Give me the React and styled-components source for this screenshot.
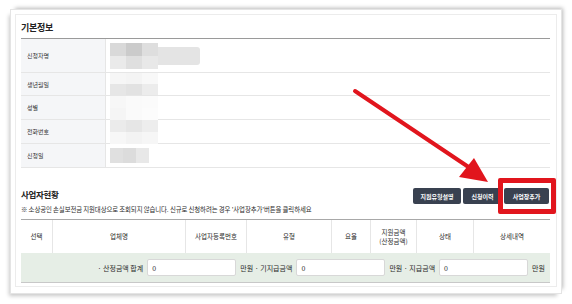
import React from 'react';
import styled, { createGlobalStyle } from 'styled-components';

const GlobalStyle = createGlobalStyle`
  body {
    margin: 0;
    background: #fff;
    font-family: "Noto Sans CJK KR", "Noto Sans", sans-serif;
    color: #333;
  }
`;

const Page = styled.div`
  position: relative;
  width: 572px;
  height: 304px;
  padding: 9px 0 0 10px;
  box-sizing: border-box;
  overflow: hidden;
`;

const Paper = styled.div`
  width: 552px;
  height: 285px;
  box-sizing: border-box;
  border: 1px solid #e4e4e4;
  background: #fff;
  box-shadow: 3px -3px 4px -2px rgba(0, 0, 0, 0.28), -3px 4px 4px -2px rgba(0, 0, 0, 0.22);
`;

const Inner = styled.div`
  margin: 4px;
  height: 273px;
  box-sizing: border-box;
  border: 1px solid #ececec;
  padding: 7px 6px 0 5px;
`;

const Title = styled.h2`
  margin: 0;
  font-size: 9px;
  line-height: 11px;
  font-weight: 700;
  color: #222;
  letter-spacing: -0.3px;
`;

const InfoTable = styled.div`
  margin-top: 5px;
  border-top: 1px solid #9a9a9a;
  display: grid;
  grid-template-columns: 85px 1fr;
`;

const Label = styled.div`
  height: ${p => p.h}px;
  box-sizing: border-box;
  background: #f5f6f8;
  border-bottom: 1px solid #e6e6e6;
  border-right: 1px solid #e6e6e6;
  display: flex;
  align-items: center;
  padding-left: 6px;
  font-size: 6px;
  color: #333;
`;

const Value = styled.div`
  height: ${p => p.h}px;
  box-sizing: border-box;
  border-bottom: 1px solid #e6e6e6;
  display: flex;
  align-items: center;
  padding-left: 4px;
`;

const FakeInput = styled.div`
  position: relative;
  width: 90px;
  height: 18px;
  border-radius: 3px;
  background: #e4e4e4;
`;

const Mosaic = styled.div`
  display: grid;
  grid-template-columns: repeat(${p => p.cols}, ${p => p.cw}px);
  grid-auto-rows: ${p => p.ch}px;
  ${p => p.over && 'position: absolute; left: 0; top: -4px;'}
`;

const Cell = styled.div`
  background: ${p => p.c};
`;

const SectionHead = styled.div`
  margin-top: 20px;
  display: flex;
  justify-content: space-between;
  align-items: flex-start;
`;

const SubTitle = styled.h3`
  margin: 1px 0 0 0;
  font-size: 8.5px;
  line-height: 11px;
  font-weight: 700;
  color: #222;
  letter-spacing: -0.3px;
`;

const Buttons = styled.div`
  display: flex;
  gap: 2px;
  margin-right: 1px;
`;

const Btn = styled.button`
  width: ${p => p.w}px;
  height: 16px;
  padding: 0;
  border: none;
  border-radius: 2px;
  background: #394150;
  color: #fff;
  font-family: inherit;
  font-size: 6px;
  font-weight: 700;
`;

const Note = styled.p`
  margin: 2px 0 5px 0;
  font-size: 6.4px;
  line-height: 8px;
  color: #2a2a2a;
  letter-spacing: -0.1px;
`;

const Grid = styled.div`
  display: grid;
  grid-template-columns: 32px 133px 61px 85px 39px 46px 57px 1fr;
  border-top: 1px solid #a8a8a8;
`;

const Th = styled.div`
  height: 33px;
  box-sizing: border-box;
  border-right: ${p => (p.last ? 'none' : '1px solid #e6e6e6')};
  display: flex;
  align-items: center;
  justify-content: center;
  text-align: center;
  font-size: 6.5px;
  line-height: 9px;
  color: #2a2a2a;
  white-space: nowrap;
`;

const SumRow = styled.div`
  height: 30px;
  box-sizing: border-box;
  background: #e6eee6;
  border-bottom: 1px solid #c8c8c8;
  display: flex;
  align-items: center;
  justify-content: flex-end;
  gap: 4px;
  padding-right: 5px;
  font-size: 7px;
  color: #2a2a2a;
`;

const Amount = styled.div`
  width: 89px;
  height: 17px;
  box-sizing: border-box;
  background: #fff;
  border: 1px solid #d8d8d8;
  border-radius: 2px;
  display: flex;
  align-items: center;
  padding-left: 4px;
  font-size: 7px;
`;

const Highlight = styled.div`
  position: absolute;
  left: 498px;
  top: 178px;
  width: 58px;
  height: 36px;
  box-sizing: border-box;
  border: 5px solid #e1151d;
  border-radius: 2px;
`;

const Overlay = styled.svg`
  position: absolute;
  left: 0;
  top: 0;
`;

const rows = [
  { label: '신청자명', h: 34 },
  { label: '생년월일', h: 23 },
  { label: '성별', h: 24 },
  { label: '전화번호', h: 24 },
  { label: '신청일', h: 24 },
];

const masks = [
  null,
  { cols: 3, cw: 16, ch: 11, cells: ['#f6f6f6', '#f4f4f4', '#f8f8f8', '#e6e6e6', '#e2e2e2', '#ececec'] },
  { cols: 3, cw: 16, ch: 12, cells: ['#f7f7f7', '#fafafa', '#fbfbfb', '#f5f5f5', '#fafafa', '#fcfcfc'] },
  { cols: 3, cw: 16, ch: 12, cells: ['#ebebeb', '#e6e6e6', '#ededed', '#f7f7f7', '#f3f3f3', '#f6f6f6'] },
  { cols: 3, cw: 13, ch: 15, cells: ['#e0e0e0', '#dcdcdc', '#e8e8e8'] },
];

function MaskBlock({ m, over }) {
  return (
    <Mosaic cols={m.cols} cw={m.cw} ch={m.ch} over={over}>
      {m.cells.map((c, i) => (
        <Cell key={i} c={c} />
      ))}
    </Mosaic>
  );
}

const nameMask = { cols: 3, cw: 16, ch: 13, cells: ['#d9d9d9', '#cbcbcb', '#dedede', '#eaeaea', '#dfdfdf', '#e8e8e8'] };

const heads = ['선택', '업체명', '사업자등록번호', '유형', '요율', '지원금액\n(산정금액)', '상태', '상세내역'];

export default function App() {
  return (
    <Page>
      <GlobalStyle />
      <Paper>
        <Inner>
          <Title>기본정보</Title>
          <InfoTable>
            {rows.map((r, i) => (
              <React.Fragment key={r.label}>
                <Label h={r.h}>{r.label}</Label>
                <Value h={r.h}>
                  {i === 0 ? (
                    <FakeInput>
                      <MaskBlock m={nameMask} over />
                    </FakeInput>
                  ) : (
                    <MaskBlock m={masks[i]} />
                  )}
                </Value>
              </React.Fragment>
            ))}
          </InfoTable>

          <SectionHead>
            <SubTitle>사업자현황</SubTitle>
            <Buttons>
              <Btn w={48}>지원유형설명</Btn>
              <Btn w={39}>신청이력</Btn>
              <Btn w={45}>사업장추가</Btn>
            </Buttons>
          </SectionHead>
          <Note>※ 소상공인 손실보전금 지원대상으로 조회되지 않습니다. 신규로 신청하려는 경우 '사업장추가'버튼을 클릭하세요</Note>

          <Grid>
            {heads.map((h, i) => (
              <Th key={h} last={i === heads.length - 1}>
                {h.split('\n').map((t, j) => (
                  <React.Fragment key={j}>
                    {j > 0 && <br />}
                    {t}
                  </React.Fragment>
                ))}
              </Th>
            ))}
          </Grid>
          <SumRow>
            <span>· 산정금액 합계</span>
            <Amount>0</Amount>
            <span>만원 · 기지급금액</span>
            <Amount>0</Amount>
            <span>만원 · 지급금액</span>
            <Amount>0</Amount>
            <span>만원</span>
          </SumRow>
        </Inner>
      </Paper>

      <Highlight />
      <Overlay width="572" height="304" viewBox="0 0 572 304">
        <line x1="355" y1="91" x2="470" y2="168" stroke="#e1151d" strokeWidth="4" strokeLinecap="round" />
        <polygon points="488,182 459,177 474,158" fill="#e1151d" />
      </Overlay>
    </Page>
  );
}
